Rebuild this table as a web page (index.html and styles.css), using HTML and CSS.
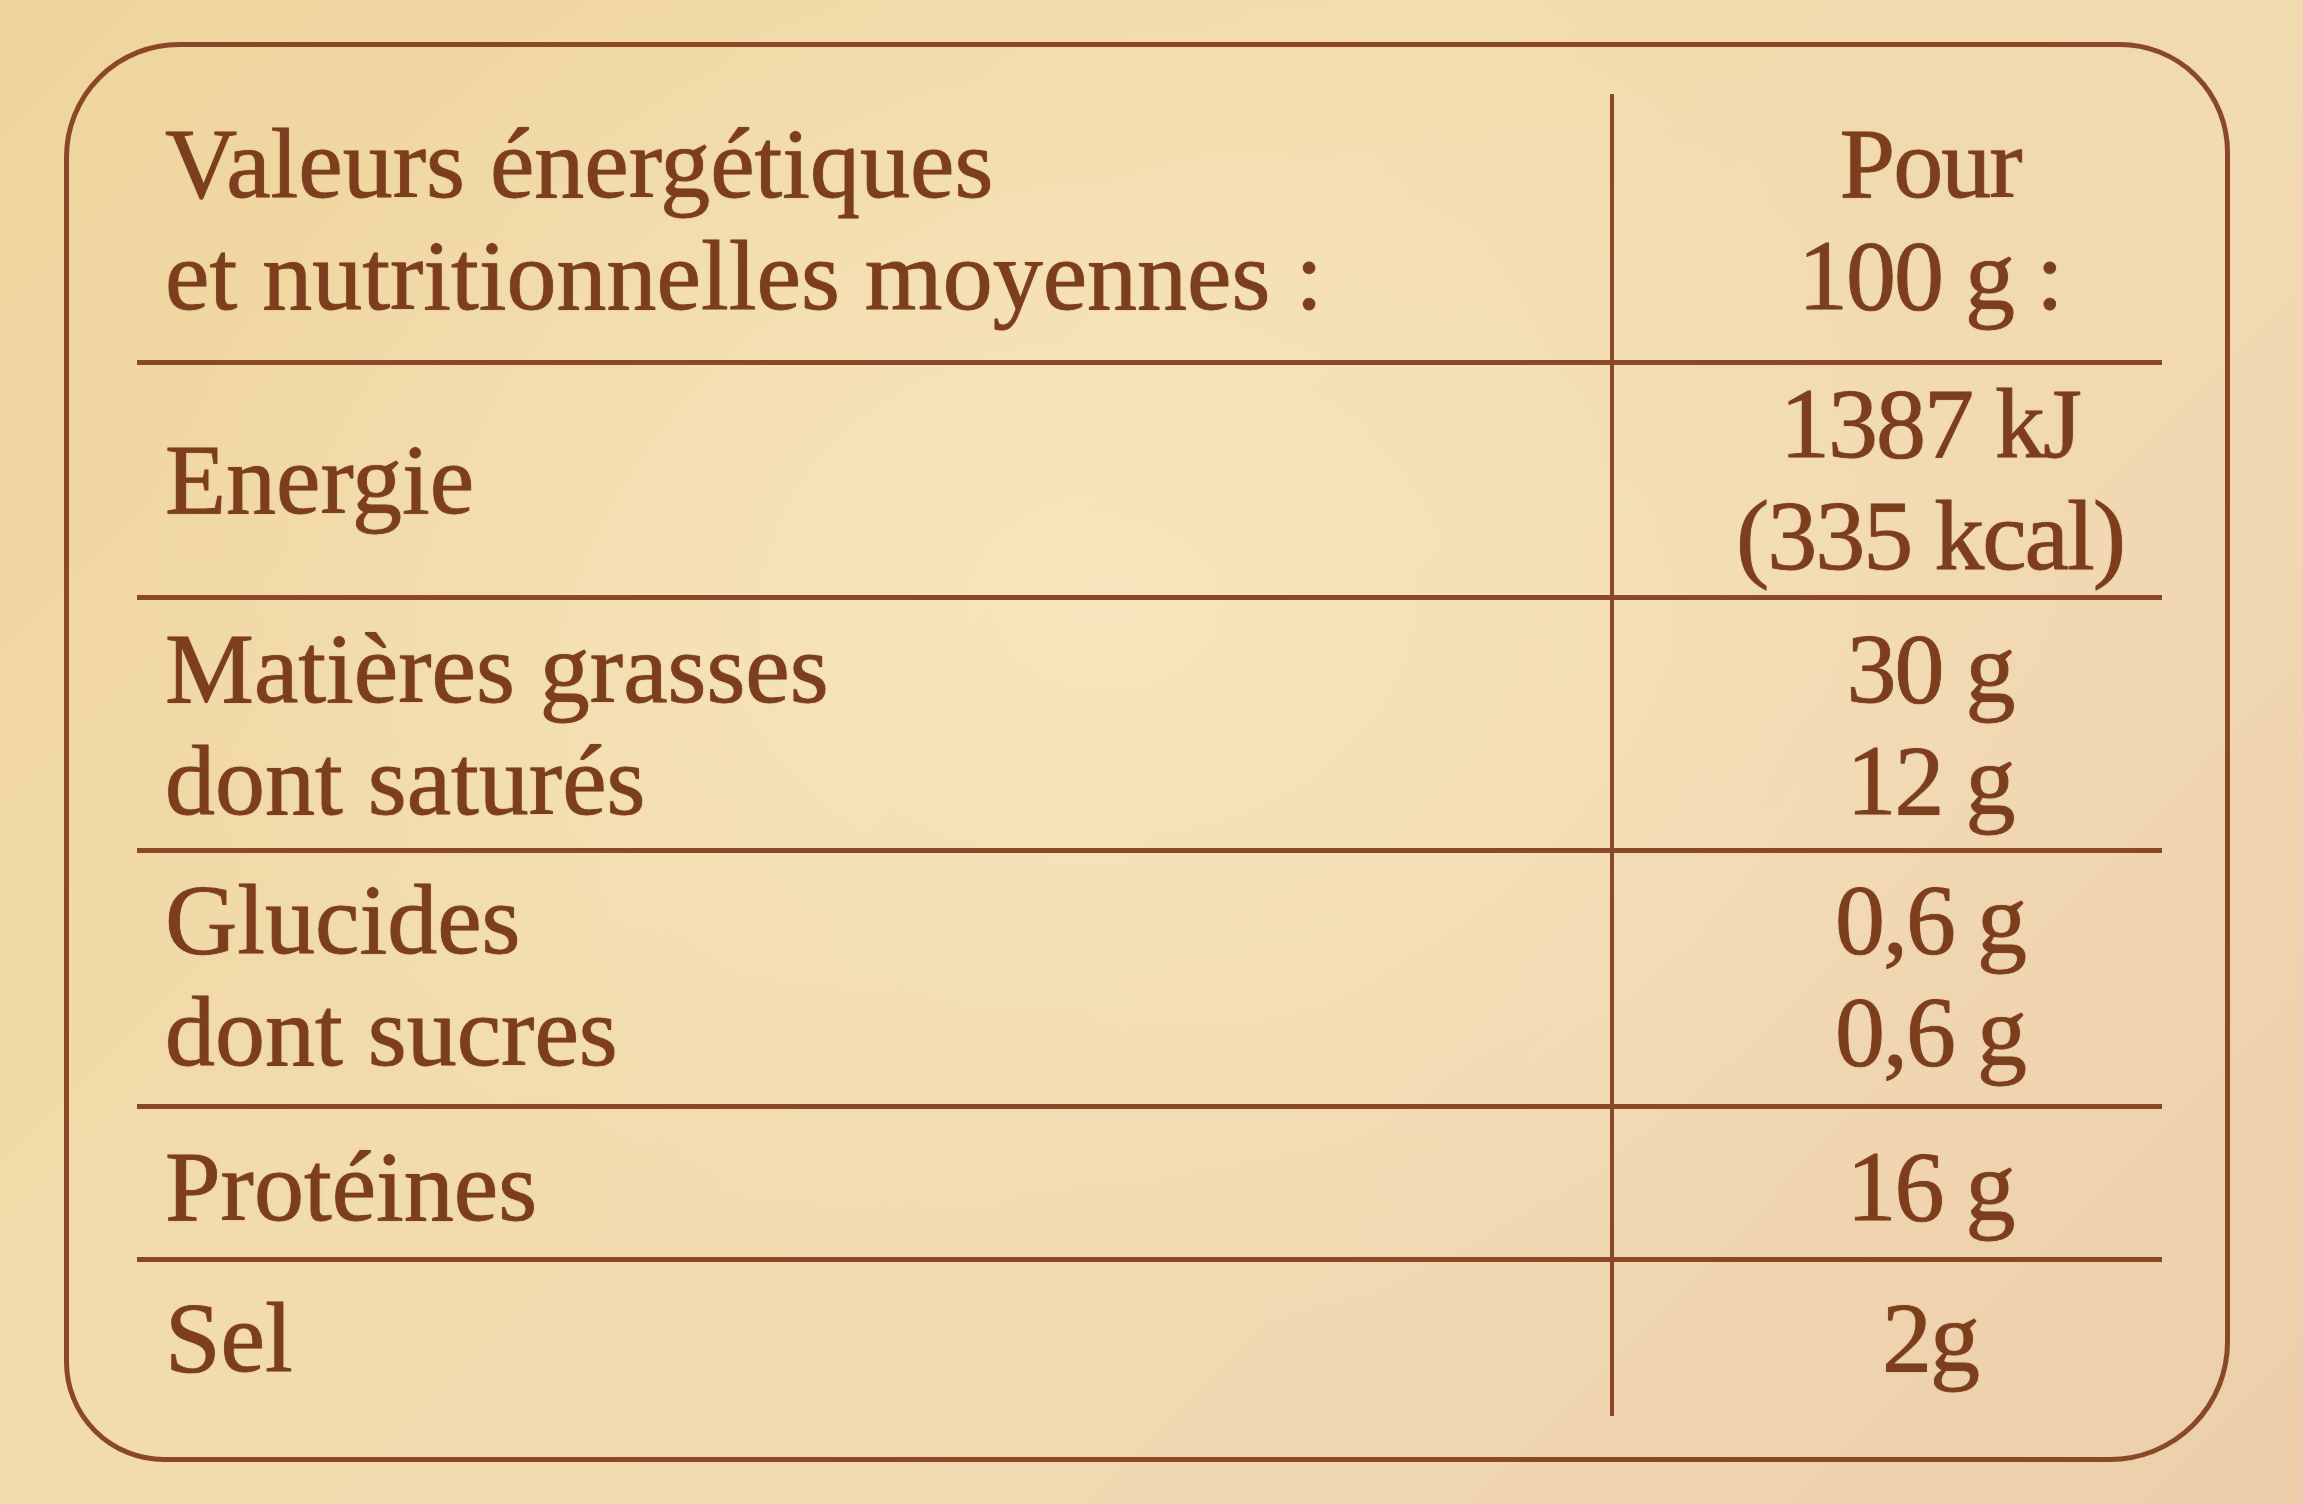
FILE: index.html
```html
<!DOCTYPE html>
<html lang="fr">
<head>
<meta charset="utf-8">
<title>Valeurs nutritionnelles</title>
<link rel="stylesheet" href="styles.css">
</head>
<body>
<div class="card">
  <div class="table">
    <div class="row r1">
      <div class="label">Valeurs énergétiques<br>et nutritionnelles moyennes :</div>
      <div class="value">Pour<br>100 g :</div>
    </div>
    <div class="row r2">
      <div class="label center">Energie</div>
      <div class="value">1387 kJ<br>(335 kcal)</div>
    </div>
    <div class="row r3">
      <div class="label">Matières grasses<br>dont saturés</div>
      <div class="value">30 g<br>12 g</div>
    </div>
    <div class="row r4">
      <div class="label">Glucides<br>dont sucres</div>
      <div class="value">0,6 g<br>0,6 g</div>
    </div>
    <div class="row r5">
      <div class="label">Protéines</div>
      <div class="value">16 g</div>
    </div>
    <div class="row r6 last">
      <div class="label">Sel</div>
      <div class="value">2g</div>
    </div>
  </div>
</div>
</body>
</html>
```
FILE: styles.css
```css
html, body {
  margin: 0;
  padding: 0;
}
body {
  width: 2303px;
  height: 1504px;
  overflow: hidden;
  background:
    radial-gradient(ellipse 60% 70% at 48% 40%, rgba(247, 230, 190, 0.9) 0%, rgba(247, 230, 190, 0) 70%),
    linear-gradient(135deg, #efd49c 0%, #f2dcac 40%, #f1d8b2 70%, #ecceaa 100%);
  font-family: "Liberation Serif", "Times New Roman", serif;
  color: #7c3e1d;
}
.card {
  box-sizing: border-box;
  margin: 42px 0 0 64px;
  width: 2166px;
  height: 1420px;
  border: 5px solid #8a4826;
  border-radius: 115px 110px 120px 100px;
  padding: 47px 63px 0 68px;
}
.table {
  display: flex;
  flex-direction: column;
  width: 2025px;
}
.row {
  display: grid;
  grid-template-columns: 1477px 1fr;
  border-bottom: 5px solid #8a4826;
}
.row.last {
  border-bottom: none;
}
.label, .value {
  font-size: 100px;
  line-height: 112px;
  -webkit-text-stroke: 0.8px #7c3e1d;
  text-shadow: 0 0 1.5px rgba(124, 62, 29, 0.5);
}
.label {
  padding-left: 28px;
  border-right: 4px solid #8a4826;
  white-space: nowrap;
}
.label.center {
  display: flex;
  align-items: center;
}
.value {
  text-align: center;
  padding-left: 84px;
  letter-spacing: -2px;
  white-space: nowrap;
}
.r1 .label, .r1 .value { padding-top: 14px; padding-bottom: 28px; }
.r2 .value { padding-top: 3px; padding-bottom: 3px; }
.r3 .label, .r3 .value { padding-top: 13px; padding-bottom: 11px; }
.r4 .label, .r4 .value { padding-top: 11px; padding-bottom: 16px; }
.r5 .label, .r5 .value { padding-top: 22px; padding-bottom: 14px; }
.r6 .label, .r6 .value { padding-top: 20px; padding-bottom: 22px; }
```
